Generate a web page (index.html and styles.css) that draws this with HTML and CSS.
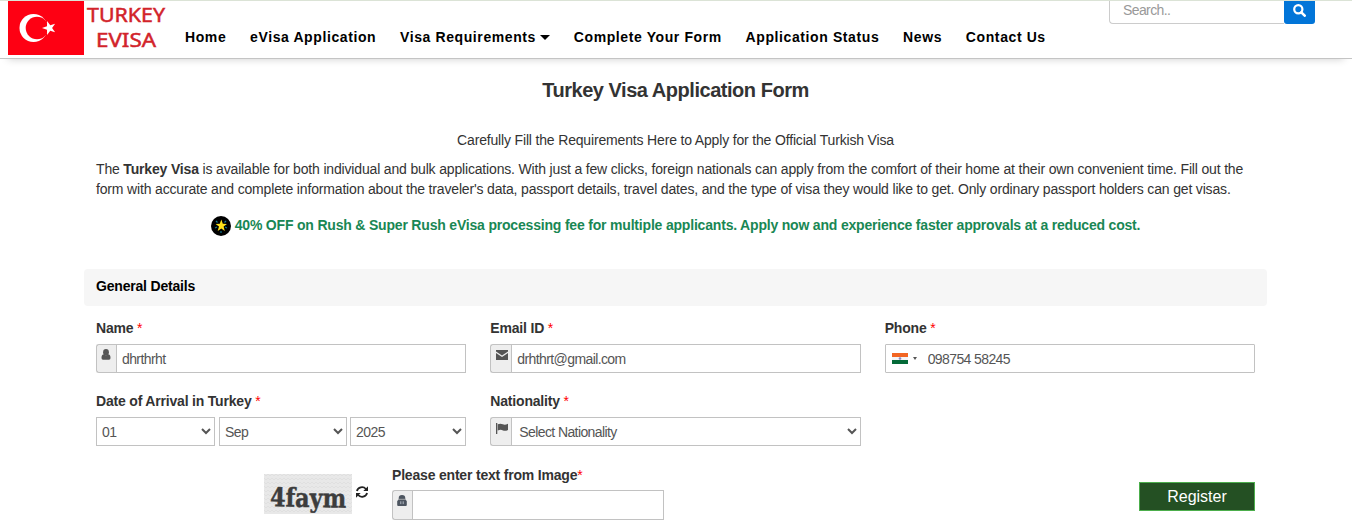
FILE: index.html
```html
<!DOCTYPE html>
<html lang="en">
<head>
    <meta charset="UTF-8">
    <meta name="viewport" content="width=device-width, initial-scale=1.0">
    <title>Turkey Visa Application Form</title>
    <link rel="stylesheet" href="styles.css">
</head>
<body>
    <header class="header">
        <a class="logo" href="#">
            <svg width="160" height="55" viewBox="0 0 160 55">
                <rect width="76" height="54" fill="#fe0013"/>
                <circle cx="25.5" cy="27" r="14" fill="#fff"/>
                <circle cx="29" cy="27" r="11.3" fill="#fe0013"/>
                <path d="M34 27l5-1.7.1-5.2 3.1 4.2 4.9-1.6-3 4.3 3 4.3-4.9-1.6-3.1 4.2-.1-5.2z" fill="#fff"/>
                <text class="logo-text" x="79" y="21" textLength="78" lengthAdjust="spacingAndGlyphs">TURKEY</text>
                <text class="logo-text" x="88" y="46" textLength="60" lengthAdjust="spacingAndGlyphs">EVISA</text>
            </svg>
        </a>
        <nav class="nav">
            <a href="#">Home</a>
            <a href="#">eVisa Application</a>
            <a href="#">Visa Requirements<span class="caret"></span></a>
            <a href="#">Complete Your Form</a>
            <a href="#">Application Status</a>
            <a href="#">News</a>
            <a href="#">Contact Us</a>
        </nav>
        <form class="search">
            <input type="text" placeholder="Search..">
            <button type="button" aria-label="Search">
                <svg width="13" height="13" viewBox="0 0 13 13" fill="none" stroke="#fff">
                    <circle cx="5.3" cy="5.3" r="4.1" stroke-width="2.2"/>
                    <path d="M8.3 8.3l3.4 3.4" stroke-width="2.6" stroke-linecap="round"/>
                </svg>
            </button>
        </form>
    </header>

    <main class="container">
        <h1>Turkey Visa Application Form</h1>
        <p class="subtitle">Carefully Fill the Requirements Here to Apply for the Official Turkish Visa</p>
        <p class="intro">The <b>Turkey Visa</b> is available for both individual and bulk applications. With just a few clicks, foreign nationals can apply from the comfort of their home at their own convenient time. Fill out the form with accurate and complete information about the traveler's data, passport details, travel dates, and the type of visa they would like to get. Only ordinary passport holders can get visas.</p>
        <p class="offer">
            <svg width="20" height="20" viewBox="0 0 20 20">
                <circle cx="10" cy="10" r="10" fill="#000"/>
                <path d="M5 5l1.5 1.5M15 5l-1.5 1.5M4 12l2-1M16 12l-2-1M10 15v2" stroke="#127a91" stroke-width="1.2"/>
                <path d="M10.3 3.6l1.5 4.2 4.2.2-3.4 2.6 1.2 4.3-3.5-2.5-3.6 2.5 1.3-4.3-3.4-2.6 4.2-.2z" fill="#ffe11a"/>
            </svg>
            <span>40% OFF on Rush &amp; Super Rush eVisa processing fee for multiple applicants. Apply now and experience faster approvals at a reduced cost.</span>
        </p>

        <h2>General Details</h2>

        <form>
            <div class="row">
                <div class="field">
                    <label for="name">Name <i>*</i></label>
                    <div class="input-group">
                        <span class="addon">
                            <svg width="10" height="11" viewBox="0 0 10 11" fill="#555">
                                <ellipse cx="5" cy="3.2" rx="2.9" ry="3.2"/>
                                <path d="M2.4 5.2Q.5 5.6.5 9q0 1.7 1.5 1.700h6q1.500 0 1.500-1.700 0-3.400-1.900-3.800Q5 7.400 2.400 5.200z"/>
                            </svg>
                        </span>
                        <input type="text" id="name" value="dhrthrht">
                    </div>
                </div>
                <div class="field">
                    <label for="email">Email ID <i>*</i></label>
                    <div class="input-group">
                        <span class="addon addon-wide">
                            <svg width="12" height="10" viewBox="0 0 12 10" fill="#555">
                                <path d="M0 0h12v1.6L6 5.6 0 1.6zM0 3l6 4 6-4v7H0z"/>
                            </svg>
                        </span>
                        <input type="text" id="email" value="drhthrt@gmail.com">
                    </div>
                </div>
                <div class="field">
                    <label for="phone">Phone <i>*</i></label>
                    <div class="phone">
                        <svg width="16" height="11" viewBox="0 0 16 11">
                            <rect width="16" height="11" fill="#f4f4f6"/>
                            <rect width="16" height="4" fill="#f26522"/>
                            <rect y="7" width="16" height="4" fill="#046a38"/>
                            <circle cx="8" cy="5.5" r="1.3" fill="#8888c0"/>
                        </svg>
                        <span class="arrow"></span>
                        <input type="text" id="phone" value="098754 58245">
                    </div>
                </div>
            </div>

            <div class="row">
                <div class="field">
                    <label for="day">Date of Arrival in Turkey <i>*</i></label>
                    <div class="date">
                        <select id="day"><option>01</option></select>
                        <select><option>Sep</option></select>
                        <select><option>2025</option></select>
                    </div>
                </div>
                <div class="field">
                    <label for="nationality">Nationality <i>*</i></label>
                    <div class="input-group">
                        <span class="addon addon-wide">
                            <svg width="12" height="11" viewBox="0 0 12 11" fill="#555">
                                <path d="M0 0h1.3v11H0zM1.8 1.3q2.500-1.300 5 0 2.200 1 5.200-.6v6.200q-2.800 1.500-5 .5-2.500-1.200-5.200.2z"/>
                            </svg>
                        </span>
                        <select id="nationality"><option>Select Nationality</option></select>
                    </div>
                </div>
            </div>

            <div class="captcha-row">
                <svg class="captcha" width="88" height="40" viewBox="0 0 88 40">
                    <defs>
                        <pattern id="dots" width="4" height="4" patternUnits="userSpaceOnUse">
                            <rect width="4" height="4" fill="#e8e8e8"/>
                            <path d="M0 0l2 2 2-2" fill="none" stroke="#dedede" stroke-width=".8"/>
                        </pattern>
                    </defs>
                    <rect width="88" height="40" fill="url(#dots)"/>
                    <text class="captcha-text" x="6" y="33" textLength="76" lengthAdjust="spacingAndGlyphs" transform="rotate(1 44 30)">4faym</text>
                </svg>
                <svg class="refresh" width="12" height="12" viewBox="0 0 12 12" fill="none" stroke="#222" stroke-width="1.8">
                    <path d="M.9 5a5.200 5 0 0 1 9-2M11.100 7a5.200 5 0 0 1-9 2"/>
                    <path d="M12 .3V5H7.300zM0 11.700V7h4.700z" fill="#222" stroke="none"/>
                </svg>
                <div class="captcha-field">
                    <label for="code">Please enter text from Image<i>*</i></label>
                    <div class="input-group">
                        <span class="addon">
                            <svg width="10" height="11" viewBox="0 0 10 11">
                                <path d="M1.7 4.500V3.200a3.300 3.200 0 0 1 6.600 0v1.300l1.500 1.500V10q0 1-1 1H1.200q-1 0-1-1V6z" fill="#4d5560"/>
                                <path d="M2 4.300h6" stroke="#bbb" stroke-width=".8"/>
                                <path d="M3.800 6.300v2.800M6.200 6.300v2.800" stroke="#ccd3dd" stroke-width=".8"/>
                            </svg>
                        </span>
                        <input type="text" id="code">
                    </div>
                </div>
                <button type="button" class="register">Register</button>
            </div>
        </form>
    </main>
</body>
</html>
```
FILE: styles.css
```css
* {
    box-sizing: border-box;
}

body {
    font-family: "Liberation Sans", Arial, sans-serif;
    font-size: 14px;
    line-height: 20px;
    letter-spacing: -0.19px;
    color: #333;
    background-color: #fff;
    margin: 0;
    overflow: hidden;
}

.header {
    display: flex;
    height: 59px;
    padding-left: 8px;
    border-top: 1px solid #dbe3d6;
    border-bottom: 1px solid #c4c4c4;
    box-shadow: 0 8px 8px -8px rgba(0, 0, 0, 0.2);
}

.logo-text {
    font-family: "Noto Sans", sans-serif;
    font-size: 20px;
    letter-spacing: 0;
    fill: #d2232a;
    stroke: #d2232a;
    stroke-width: 0.5px;
}

.nav {
    display: flex;
    gap: 23.8px;
    padding: 26px 0 0 17px;
    white-space: nowrap;
}

.nav a {
    color: #000;
    font-weight: bold;
    letter-spacing: 0.6px;
    text-decoration: none;
}

.caret {
    display: inline-block;
    margin-left: 4px;
    vertical-align: 2px;
    border: 5px solid transparent;
    border-top-color: #000;
    border-bottom: 0;
}

.search {
    display: flex;
    height: 23px;
    margin: 0 37px 0 auto;
}

.search input {
    width: 175px;
    padding: 0 13px 4px;
    border: 1px solid #ccc;
    border-top: 0;
    border-right: 0;
    border-radius: 0 0 0 4px;
    font: inherit;
    letter-spacing: -0.6px;
}

.search input::placeholder {
    color: #999;
}

.search button {
    width: 31px;
    height: 23px;
    padding: 3px 0 0;
    border: 0;
    border-radius: 0 0 3px 3px;
    background-color: #0275d8;
    display: flex;
    justify-content: center;
}

.container {
    width: 1183px;
    margin-left: 84px;
}

h1 {
    margin: 0;
    padding-top: 19px;
    font-size: 20px;
    line-height: 24px;
    letter-spacing: -0.47px;
    text-align: center;
}

.subtitle {
    margin: 28px 0 9px;
    letter-spacing: -0.165px;
    text-align: center;
}

.intro {
    margin: 0 12px;
    letter-spacing: -0.167px;
}

.offer {
    display: flex;
    justify-content: center;
    gap: 4px;
    margin: 16px 0 0;
    color: #198754;
    font-weight: bold;
}

.offer svg {
    margin-top: 1px;
}

h2 {
    height: 37px;
    margin: 33px 0 12px;
    padding: 7px 12px;
    border-radius: 4px;
    background-color: #f6f6f6;
    color: #000;
    font-size: 14px;
    line-height: 20px;
}

.row {
    display: grid;
    grid-template-columns: repeat(3, 1fr);
    height: 73px;
}

.field {
    padding: 0 12px;
}

label {
    display: block;
    height: 26px;
    font-weight: bold;
}

label i {
    color: red;
    font-style: normal;
    font-weight: normal;
}

.input-group,
.phone,
.date {
    display: flex;
    height: 29px;
}

.addon {
    width: 20px;
    padding: 4px 1px 0 0;
    border: 1px solid #c2c2c2;
    border-right: 0;
    border-radius: 3px 0 0 3px;
    background-color: #eee;
    line-height: 0;
    text-align: center;
}

.addon-wide {
    width: 21px;
    padding: 5px 0 0 2px;
}

.input-group input,
.input-group select,
.date select,
.phone {
    flex: 1;
    min-width: 0;
    border: 1px solid #c2c2c2;
    border-radius: 0;
    background-color: #fff;
    color: #555;
    font: inherit;
    letter-spacing: -0.6px;
}

.input-group input {
    padding: 0 5px;
}

.input-group select {
    padding: 0 3px;
}

.date {
    gap: 4px;
}

.date select {
    flex: 0 0 119px;
    padding: 0 1px;
    letter-spacing: -0.5px;
}

.date select:nth-child(2) {
    flex-basis: 128px;
}

.date select:nth-child(3) {
    flex: 1;
    margin-left: -1px;
}

.phone {
    align-items: center;
    padding-left: 6px;
    border-radius: 1px;
}

.phone input {
    width: 200px;
    padding: 0;
    border: 0;
    color: #555;
    font: inherit;
    letter-spacing: inherit;
}

.arrow {
    margin: 0 11px 0 5px;
    border: 2px solid transparent;
    border-top: 3px solid #555;
    border-bottom: 0;
}

.captcha-row {
    display: flex;
    padding: 1px 12px 0 180px;
}

.captcha {
    margin-top: 9px;
}

.captcha-text {
    font-family: "DejaVu Serif", serif;
    font-size: 26px;
    font-weight: bold;
    letter-spacing: 0;
    fill: #3c3c3c;
    stroke: #3c3c3c;
    stroke-width: 0.5px;
}

.refresh {
    margin: 21px 24px 0 4px;
}

.captcha-field {
    width: 272px;
}

.captcha-field label {
    height: 25px;
}

.captcha-field .input-group {
    height: 30px;
}

.register {
    width: 116px;
    height: 29px;
    margin: 17px 0 0 auto;
    border: 1px solid #4cae4c;
    background-color: #245023;
    color: #fff;
    font: 16px "Liberation Sans", Arial, sans-serif;
}
```
